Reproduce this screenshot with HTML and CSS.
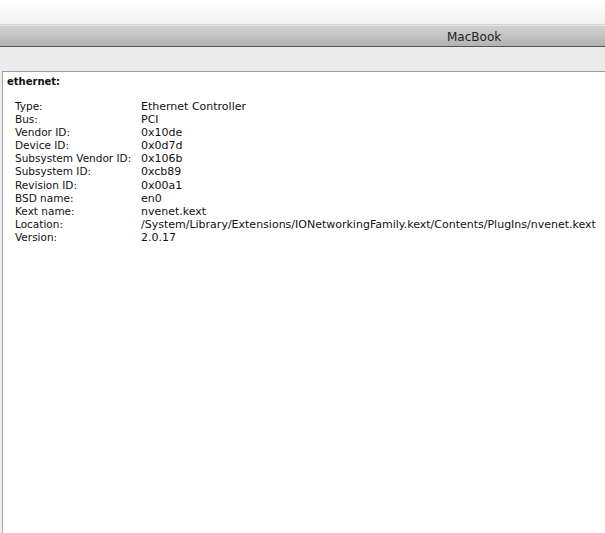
FILE: index.html
```html
<!DOCTYPE html>
<html>
	<head>
		<meta charset="utf-8">
		<title>MacBook</title>
		<link rel="stylesheet" href="styles.css">
	</head>
	<body>
		<!-- 顶部留白 -->
		<div class="topArea"></div>
		<!-- 标题栏 -->
		<div class="titleBar">
			<span class="titleText">MacBook</span>
		</div>
		<div class="gapBar"></div>
		<!-- 详情面板 -->
		<div class="detail">
			<div class="detailHead">ethernet:</div>
			<dl class="infoList">
				<dt>Type:</dt><dd>Ethernet Controller</dd>
				<dt>Bus:</dt><dd>PCI</dd>
				<dt>Vendor ID:</dt><dd>0x10de</dd>
				<dt>Device ID:</dt><dd>0x0d7d</dd>
				<dt>Subsystem Vendor ID:</dt><dd>0x106b</dd>
				<dt>Subsystem ID:</dt><dd>0xcb89</dd>
				<dt>Revision ID:</dt><dd>0x00a1</dd>
				<dt>BSD name:</dt><dd>en0</dd>
				<dt>Kext name:</dt><dd>nvenet.kext</dd>
				<dt>Location:</dt><dd>/System/Library/Extensions/IONetworkingFamily.kext/Contents/PlugIns/nvenet.kext</dd>
				<dt>Version:</dt><dd>2.0.17</dd>
			</dl>
		</div>
	</body>
</html>
```

FILE: styles.css
```css
*{
	margin: 0px;padding: 0px;
}
html,body{
	height: 100%;
}
body{
	background-color: #ececec;
	font-family: "DejaVu Sans", "Liberation Sans", sans-serif;
	color: #111;
	display: flex;
	flex-direction: column;
	overflow: hidden;
}
/* 顶部渐变区 */
.topArea{
	height: 24px;
	background: linear-gradient(#ffffff, #f1f1f1);
	border-bottom: 1px solid #d4d4d4;
}
.titleBar{
	height: 20px;
	background: linear-gradient(#d3d3d3, #b2b2b2);
	border-top: 1px solid #e6e6e6;
	border-bottom: 1px solid #555;
	display: flex;
	align-items: center;
	/* 标题靠右 */
	padding-left: 447px;
}
.titleText{
	font-size: 12px;
	color: #222;
	position: relative;
	top: 1px;
}
.gapBar{
	height: 24px;
}
/* 白色详情区 */
.detail{
	flex: 1;
	margin-left: 2px;
	background-color: #fff;
	border-top: 1px solid #9c9c9c;
	border-left: 1px solid #a8a8a8;
	padding: 3px 0 0 4px;
	font-size: 11px;
}
.detailHead{
	font-weight: bold;
	font-size: 10px;
	line-height: 13px;
}
.infoList{
	display: grid;
	grid-template-columns: 126px auto;
	margin: 12px 0 0 8px;
	line-height: 13.1px;
	white-space: nowrap;
}
/* 标签稍窄一点 */
.infoList dt{
	font-size: 10.5px;
}
```
